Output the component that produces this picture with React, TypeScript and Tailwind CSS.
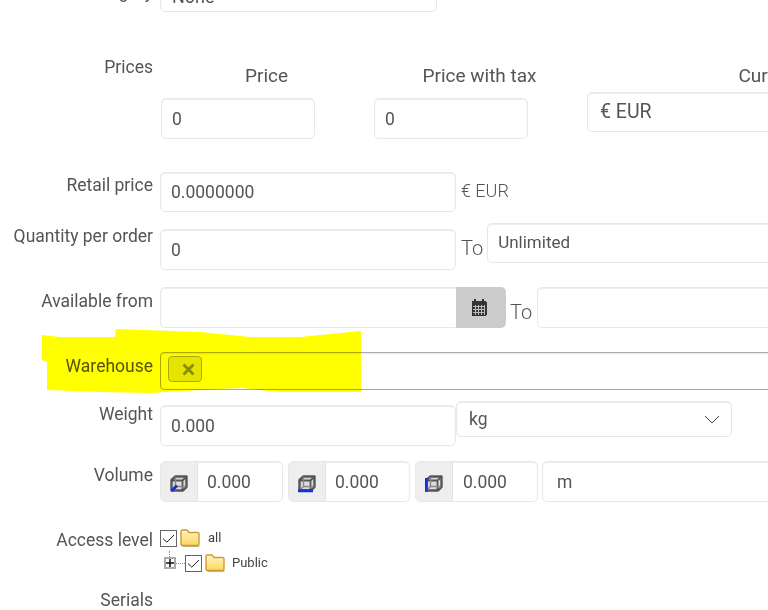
import React from "react";

const box =
  "border border-[#e8e8e8] rounded-[5px] bg-white shadow-[inset_0_1px_1px_rgba(0,0,0,0.075)] flex items-center text-[17.5px] text-[#555] overflow-hidden shrink-0";

function Label({ children, top = 0 }: { children?: React.ReactNode; top?: number }) {
  return (
    <div className="w-[153px] shrink-0 mr-[7px] text-right text-[17.5px] leading-[26px] text-[#555]" style={{ marginTop: top }}>
      {children}
    </div>
  );
}

function Cube({ edge }: { edge: "depth" | "width" | "height" }) {
  const blue = {
    depth: "M1.5 16 L7 10.5",
    width: "M0 15.8 H15",
    height: "M1.2 3 V16.8",
  }[edge];
  return (
    <svg width="18" height="18" viewBox="0 0 18 18" fill="none">
      <path d="M1.5 5 L5.5 1.5 H16.5 V12 L13 15.5 H1.5 Z" fill="#d0d0d0" fillOpacity="0.6" stroke="#555" strokeWidth="2.4" strokeLinejoin="round" />
      <path d="M1.5 5.5 H12.5 V15.5 M12.5 5.5 L16.5 1.5" stroke="#555" strokeWidth="1.8" />
      <path d="M5.5 2 V11.5 H16 M5.5 11.5 L1.5 15.5" stroke="#888" strokeWidth="1.4" />
      <path d={blue} stroke="#1530d8" strokeWidth="3" />
    </svg>
  );
}

function VolumeInput({ edge, width, pad }: { edge: "depth" | "width" | "height"; width: string; pad: string }) {
  return (
    <div className={`${box} h-[41px] ${width}`}>
      <div className="w-[37px] h-full pt-[4px] bg-[#eeeeee] border-r border-[#e3e3e3] flex items-center justify-center shrink-0">
        <Cube edge={edge} />
      </div>
      <span className={pad}>0.000</span>
    </div>
  );
}

function Check() {
  return (
    <span className="w-[17px] h-[17px] border-[1.5px] border-[#666] bg-white flex items-center justify-center shrink-0">
      <svg width="13" height="13" viewBox="0 0 13 13" fill="none">
        <path d="M1 6.5 L4.8 10.2 L12 3" stroke="#222" strokeWidth="1" />
      </svg>
    </span>
  );
}

function Folder({ id }: { id: string }) {
  return (
    <svg width="20" height="18" viewBox="0 0 20 18" className="shrink-0">
      <defs>
        <linearGradient id={id} x1="0" y1="0" x2="0" y2="1">
          <stop offset="0" stopColor="#fff6c4" />
          <stop offset="1" stopColor="#fdd65c" />
        </linearGradient>
      </defs>
      <path d="M2.5 17.5 H19.5" stroke="#bdb8a0" strokeWidth="1" />
      <path
        d="M1 15 V2.5 Q1 1 2.5 1 H7 L9 3.5 H17.5 Q19 3.5 19 5 V15 Q19 16.5 17.5 16.5 H2.5 Q1 16.5 1 15 Z"
        fill={`url(#${id})`}
        stroke="#cf9b30"
        strokeWidth="1.4"
      />
    </svg>
  );
}

function Calendar() {
  return (
    <svg width="16" height="17" viewBox="0 0 16 17" shapeRendering="crispEdges">
      <rect x="0.5" y="2" width="15" height="15" rx="1" fill="#333" />
      <rect x="3" y="0" width="2" height="3" fill="#333" />
      <rect x="11" y="0" width="2" height="3" fill="#333" />
      <path d="M2 7.5 H14 M2 10.5 H14 M2 13.5 H14 M4 6 V16 M7 6 V16 M10 6 V16 M13 6 V16" stroke="#bbb" strokeWidth="1" />
    </svg>
  );
}

export default function App() {
  return (
    <div className="relative w-[768px] h-[610px] overflow-hidden bg-white font-['Roboto',sans-serif]">
      <div className="flex flex-col mt-[-29px]">
        {/* Category */}
        <div className="flex items-start h-[41px]">
          <Label top={8}>Category</Label>
          <div className={`${box} h-[41px] w-[277px] pl-[11px] pt-[9px] text-[18px]`}>None</div>
        </div>

        {/* Prices */}
        <div className="flex items-start mt-[33px] h-[126px]">
          <Label top={9}>Prices</Label>
          <div className="flex items-start min-w-0">
            <div className="w-[213px] shrink-0">
              <div className="text-center text-[19px] leading-[24px] text-[#555] mt-[19px]">Price</div>
              <div className={`${box} h-[41px] w-[154px] ml-px mt-[10px] pl-[10px] pt-[2px]`}>0</div>
            </div>
            <div className="w-[213px] shrink-0">
              <div className="text-center text-[19px] leading-[24px] text-[#555] mt-[19px]">Price with tax</div>
              <div className={`${box} h-[41px] w-[154px] ml-px mt-[10px] pl-[10px] pt-[2px]`}>0</div>
            </div>
            <div className="w-[380px] shrink-0">
              <div className="text-center text-[19px] leading-[24px] text-[#555] mt-[19px]">Currency</div>
              <div className={`${box} h-[40px] w-[300px] ml-[1px] mt-[4px] pl-[12px] text-[19.5px]`}>€ EUR</div>
            </div>
          </div>
        </div>

        {/* Retail price */}
        <div className="flex items-start mt-[1px] h-[40px]">
          <Label>Retail price</Label>
          <div className={`${box} h-[40px] w-[296px] pl-[10px]`}>0.0000000</div>
          <span className="ml-[5px] mt-[7px] text-[18px] leading-[24px] font-light text-[#555]">€ EUR</span>
        </div>

        {/* Quantity */}
        <div className="flex items-start mt-[11px] h-[47px]">
          <Label>Quantity per order</Label>
          <div className={`${box} h-[41px] w-[296px] mt-[6px] pl-[10px] pt-[2px]`}>0</div>
          <span className="ml-[5px] mt-[13px] text-[20px] leading-[24px] font-light text-[#555]">To</span>
          <div className={`${box} h-[40px] w-[300px] ml-[4px] pl-[10px] text-[17px]`}>Unlimited</div>
        </div>

        {/* Available */}
        <div className="flex items-start mt-[17px] h-[41px]">
          <Label top={1}>Available from</Label>
          <div className={`${box} h-[41px] w-[296px] rounded-r-none border-r-0`} />
          <div className="w-[50px] h-[41px] bg-[#cccccc] rounded-r-[5px] flex items-center justify-center pr-[4px] shrink-0">
            <Calendar />
          </div>
          <span className="ml-[4px] mt-[13px] text-[20px] leading-[24px] font-light text-[#555]">To</span>
          <div className={`${box} h-[41px] w-[300px] ml-[5px]`} />
        </div>

        {/* Warehouse */}
        <div className="flex items-start mt-[24px] h-[37px]">
          <Label top={1}>Warehouse</Label>
          <div className="w-[640px] h-[38px] shrink-0 border border-[#aaaaaa] rounded-[4px] bg-white shadow-[inset_0_1px_2px_rgba(0,0,0,0.1)] px-[7px] pt-[3px]">
            <div className="w-[34px] h-[26px] border border-[#aaaaaa] rounded-[4px] bg-[#e4e4e4] flex items-center justify-end pr-[6px] text-[#8a8a8a]">
              <svg width="13" height="13" viewBox="0 0 13 13">
                <path d="M1.5 1.5 L11.5 11.5 M11.5 1.5 L1.5 11.5" stroke="currentColor" strokeWidth="2.8" />
              </svg>
            </div>
          </div>
        </div>

        {/* Weight */}
        <div className="flex items-start mt-[12px] h-[45px]">
          <Label>Weight</Label>
          <div className={`${box} h-[41px] w-[296px] mt-[4px] pl-[10px] pt-[2px]`}>0.000</div>
          <div className={`${box} h-[36px] w-[276px] pl-[12px] pr-[11px] justify-between`}>
            <span>kg</span>
            <svg width="16" height="9" viewBox="0 0 16 9" fill="none">
              <path d="M1 1 L8 8 L15 1" stroke="#444" strokeWidth="1" />
            </svg>
          </div>
        </div>

        {/* Volume */}
        <div className="flex items-start mt-[15px] h-[41px]">
          <Label top={1}>Volume</Label>
          <div className="flex gap-[5px]">
            <VolumeInput edge="depth" width="w-[123px]" pad="pl-[9px] pt-[2px]" />
            <VolumeInput edge="width" width="w-[122px]" pad="pl-[9px] pt-[2px]" />
            <VolumeInput edge="height" width="w-[123px]" pad="pl-[10px] pt-[2px]" />
            <div className={`${box} h-[41px] w-[300px] ml-[-1px] pl-[14px] pt-[2px]`}>m</div>
          </div>
        </div>

        {/* Access level */}
        <div className="flex items-start mt-[27px] h-[57px]">
          <Label top={-2}>Access level</Label>
          <div className="flex flex-col text-[13px] text-[#444]">
            <div className="flex items-center h-[18px]">
              <Check />
              <span className="ml-[3px]"><Folder id="folderA" /></span>
              <span className="ml-[8px]">all</span>
            </div>
            <div className="flex items-center h-[18px] mt-[7px]">
              <span className="relative ml-[4px] w-[12px] h-[12px] border-2 border-[#aaa] bg-white flex items-center justify-center shrink-0">
                <span className="absolute left-[3px] top-[-8px] h-[6px] border-l border-dotted border-[#888]" />
                <svg width="8" height="8" viewBox="0 0 8 8">
                  <path d="M0 4 H8 M4 0 V8" stroke="#111" strokeWidth="1.5" />
                </svg>
              </span>
              <span className="w-[9px] border-t border-dotted border-[#888]" />
              <Check />
              <span className="ml-[3px]"><Folder id="folderB" /></span>
              <span className="ml-[7px]">Public</span>
            </div>
          </div>
        </div>

        {/* Serials */}
        <div className="flex items-start mt-[1px]">
          <Label>Serials</Label>
        </div>
      </div>

      {/* Yellow marker highlight laid over the page */}
      <svg className="absolute left-0 top-0 mix-blend-multiply pointer-events-none" width="768" height="610">
        <polygon
          points="42,335 60,337 115,337 116,329 200,332 250,337 300,337 361,331 361,392 280,392 240,388 200,390 150,393 100,392 47,390 47,362 42,360"
          fill="#ffff00"
        />
      </svg>
    </div>
  );
}
